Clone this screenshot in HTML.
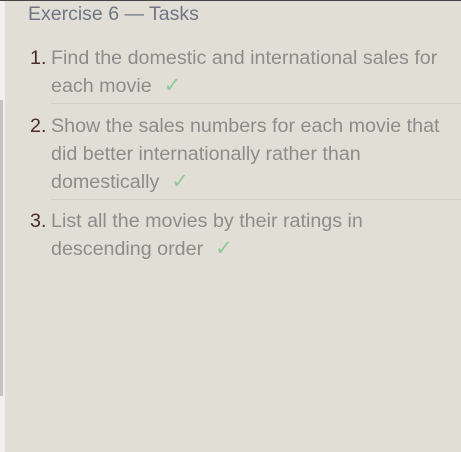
<!DOCTYPE html><html><head><style>
body{margin:0;width:461px;height:452px;background:#fff;position:relative;overflow:hidden;font-family:"Liberation Sans",sans-serif}
.strip{position:absolute;left:0;top:0;width:5px;height:452px;background:#f0f0f0}
.bar{position:absolute;left:0;top:100px;width:3px;height:296px;background:#c4c4c4}
.topl{position:absolute;left:0;top:0;width:461px;height:1px;background:#444}
.main{position:absolute;left:5px;top:1px;right:0;bottom:0;background:#e1dfd5}
h1{position:absolute;left:23px;top:2px;margin:0;font-weight:normal;font-size:19.5px;color:#6e7686}
.item{position:absolute;left:46px;font-size:19.7px;line-height:28px;color:#8c8c8a;white-space:nowrap}
.num{position:absolute;left:-21px;color:#4a2a2a}
.ck{color:#8ec99a;margin-left:12px;font-size:21px}
.div{position:absolute;left:46px;right:0;height:1px;background:#d2d0c6}
</style></head><body>
<div class="strip"></div><div class="bar"></div><div class="main">
<h1>Exercise 6 — Tasks</h1>
<div class="item" style="top:43px"><span class="num">1.</span>Find the domestic and international sales for<br>each movie<span class="ck">✓</span></div>
<div class="div" style="top:102px"></div>
<div class="item" style="top:111px"><span class="num">2.</span>Show the sales numbers for each movie that<br>did better internationally rather than<br>domestically<span class="ck">✓</span></div>
<div class="div" style="top:198px"></div>
<div class="item" style="top:206px"><span class="num">3.</span>List all the movies by their ratings in<br>descending order<span class="ck">✓</span></div>
</div><div class="topl"></div>
</body></html>
